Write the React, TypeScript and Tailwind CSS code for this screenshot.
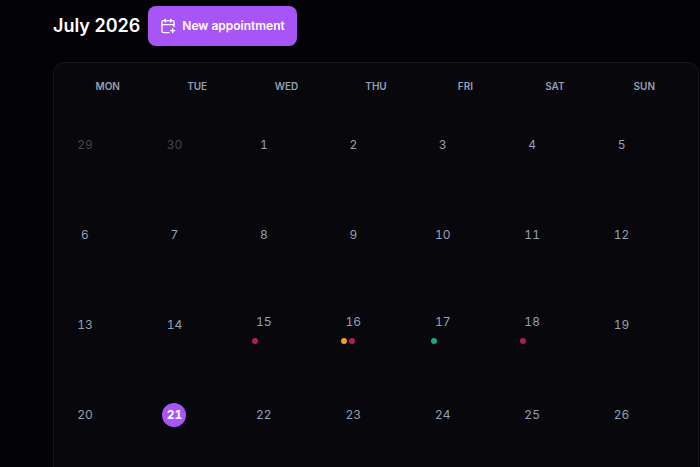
import { CalendarPlus } from "lucide-react";
import clsx from "clsx";

type Day = {
  day: number;
  outside?: boolean;
  dots?: string[];
};

const WEEKDAYS = ["Mon", "Tue", "Wed", "Thu", "Fri", "Sat", "Sun"];
const TODAY = 21;

const DOTS: Record<number, string[]> = {
  15: ["bg-[#ad1f4c]"],
  16: ["bg-[#f59e24]", "bg-[#ad1f4c]"],
  17: ["bg-[#1aab7c]"],
  18: ["bg-[#ad1f4c]"],
};

const days: Day[] = [
  { day: 29, outside: true },
  { day: 30, outside: true },
  ...Array.from({ length: 26 }, (_, i) => ({ day: i + 1, dots: DOTS[i + 1] })),
];

function DayCell({ day, outside, dots }: Day) {
  const isToday = !outside && day === TODAY;

  return (
    <button
      type="button"
      className="flex h-[90px] flex-col items-start justify-center px-[11px]"
    >
      <span
        className={clsx(
          "flex size-6 items-center justify-center rounded-full text-xs tabular-nums",
          isToday && "bg-[#a855f7] font-bold text-white",
          !isToday && outside && "text-[#45454c]",
          !isToday && !outside && "text-[#94a0b4]"
        )}
      >
        {day}
      </span>
      {dots && (
        <span className="flex h-1.5 gap-0.5 pt-1">
          {dots.map((color, i) => (
            <span key={i} className={clsx("size-1.5 shrink-0 rounded-full", color)} />
          ))}
        </span>
      )}
    </button>
  );
}

export default function App() {
  return (
    <div className="flex min-h-screen flex-col bg-[#030305] pt-1.5 pr-px pl-[53px] font-['Inter',sans-serif]">
      <header className="mb-4 flex items-center gap-2">
        <h1 className="text-lg leading-[30px] font-semibold text-white">July 2026</h1>
        <button
          type="button"
          className="flex h-10 items-center gap-1.5 rounded-lg bg-[#a855f7] px-3 text-xs font-semibold text-white"
        >
          <CalendarPlus size={16} strokeWidth={2} />
          New appointment
        </button>
      </header>
      <section className="grow rounded-t-xl border border-b-0 border-[#18181c] bg-[#07070c] pt-2">
        <div className="grid grid-cols-7 px-[9px]">
          {WEEKDAYS.map((name) => (
            <div
              key={name}
              className="pt-2 pb-1.5 text-center text-[10px] leading-[15px] font-semibold text-[#94a0b4] uppercase"
            >
              {name}
            </div>
          ))}
        </div>
        <div className="grid grid-cols-7 pr-[10px] pl-2">
          {days.map((d, i) => (
            <DayCell key={i} {...d} />
          ))}
        </div>
      </section>
    </div>
  );
}
